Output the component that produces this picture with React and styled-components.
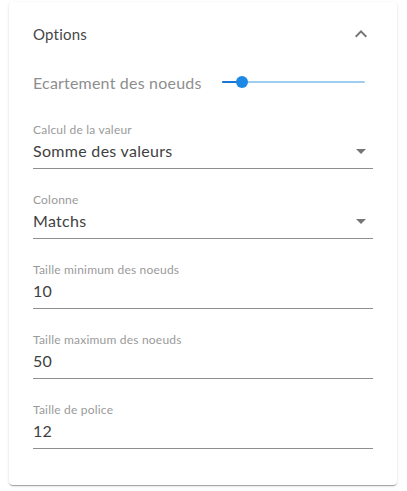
import React from "react";
import styled, { createGlobalStyle } from "styled-components";

const Global = createGlobalStyle`
  html, body { margin: 0; padding: 0; background: #ffffff; }
  body { font-family: "Lato", "Noto Sans", sans-serif; }
`;

const Page = styled.div`
  padding: 2px 10px 6px 9px;
`;

const Card = styled.section`
  background: #fff;
  border-radius: 4px;
  box-shadow: 0 2px 1px -1px rgba(0,0,0,0.2), 0 1px 1px 0 rgba(0,0,0,0.14), 0 1px 3px 0 rgba(0,0,0,0.12);
  padding: 0 24px 36px 24px;
`;

const Header = styled.div`
  height: 64px;
  display: flex;
  align-items: center;
  justify-content: space-between;
`;

const Title = styled.span`
  font-size: 15px;
  letter-spacing: 0.2px;
  color: #474747;
`;

const Icon = styled.svg`
  width: 24px;
  height: 24px;
  fill: rgba(0, 0, 0, 0.54);
  flex: none;
`;

const SliderRow = styled.div`
  height: 32px;
  display: flex;
  align-items: center;
  gap: 20px;
  margin-bottom: 24px;
`;

const SliderLabel = styled.span`
  font-size: 16px;
  letter-spacing: 0.2px;
  color: #8e8e8e;
  white-space: nowrap;
`;

const Track = styled.div`
  position: relative;
  flex: 1;
  height: 2px;
  margin-right: 8px;
  background: #9fcdf0;
  border-radius: 1px;
`;

const Fill = styled.div`
  height: 100%;
  background: #1976d2;
  border-radius: 1px;
`;

const Thumb = styled.div`
  position: absolute;
  top: 50%;
  width: 12px;
  height: 12px;
  border-radius: 50%;
  background: #1e88e5;
  transform: translate(-50%, -50%);
`;

const Fields = styled.div`
  display: flex;
  flex-direction: column;
  gap: 23px;
`;

const Field = styled.div`
  display: flex;
  flex-direction: column;
`;

const Label = styled.span`
  font-size: 12px;
  line-height: 16px;
  letter-spacing: 0.2px;
  color: #9a9a9a;
`;

const ValueRow = styled.div`
  margin-top: 1px;
  display: flex;
  align-items: center;
  height: 23px;
  padding-bottom: 6px;
  border-bottom: 1px solid #8f8f8f;
`;

const Value = styled.span`
  flex: 1;
  font-size: 16px;
  line-height: 23px;
  letter-spacing: 0.3px;
  color: #3f3f3f;
`;

const slider = 14;

const fields = [
  { label: "Calcul de la valeur", value: "Somme des valeurs", select: true },
  { label: "Colonne", value: "Matchs", select: true },
  { label: "Taille minimum des noeuds", value: "10" },
  { label: "Taille maximum des noeuds", value: "50" },
  { label: "Taille de police", value: "12" },
];

export default function App() {
  return (
    <Page>
      <Global />
      <Card>
        <Header>
          <Title>Options</Title>
          <Icon viewBox="0 0 24 24">
            <path d="m12 8-6 6 1.41 1.41L12 10.83l4.59 4.58L18 14z" />
          </Icon>
        </Header>
        <SliderRow>
          <SliderLabel>Ecartement des noeuds</SliderLabel>
          <Track>
            <Fill style={{ width: `${slider}%` }} />
            <Thumb style={{ left: `${slider}%` }} />
          </Track>
        </SliderRow>
        <Fields>
          {fields.map((f) => (
            <Field key={f.label}>
              <Label>{f.label}</Label>
              <ValueRow>
                <Value>{f.value}</Value>
                {f.select && (
                  <Icon viewBox="0 0 24 24">
                    <path d="M7 10l5 5 5-5z" />
                  </Icon>
                )}
              </ValueRow>
            </Field>
          ))}
        </Fields>
      </Card>
    </Page>
  );
}
